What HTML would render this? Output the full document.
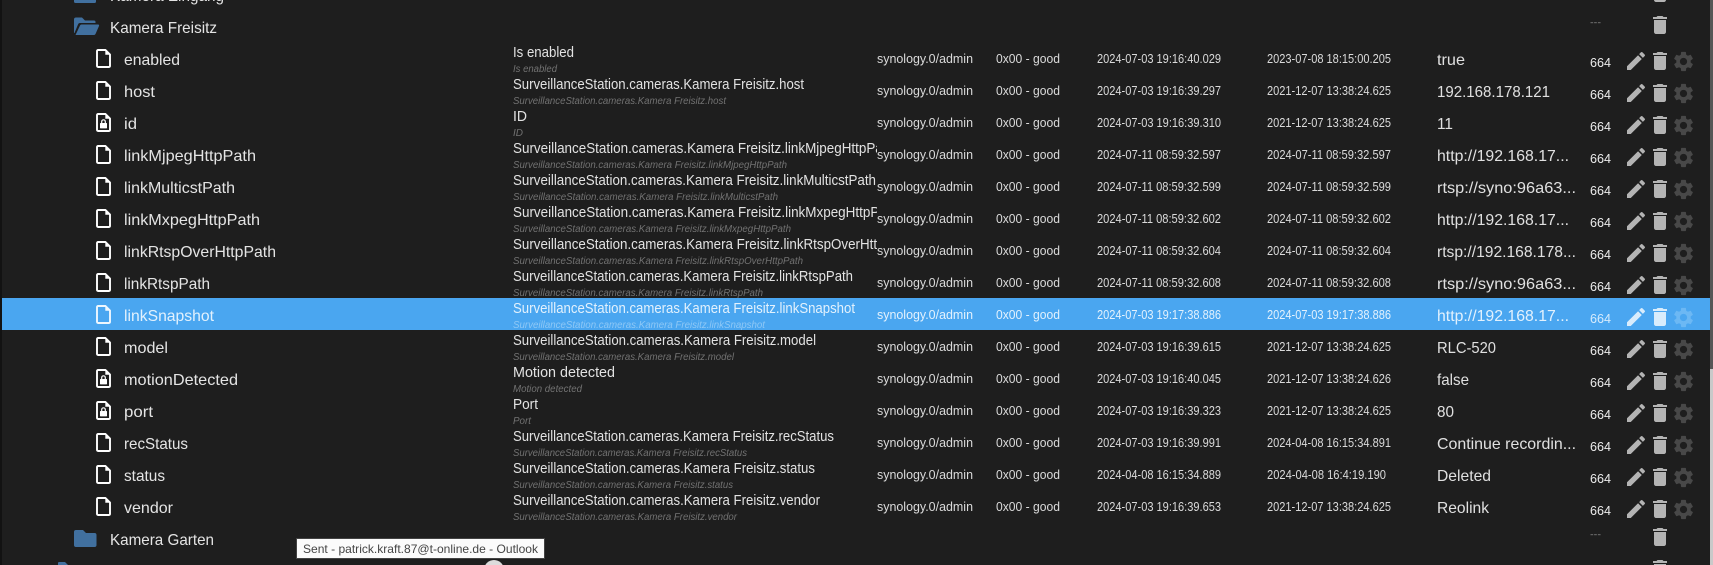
<!DOCTYPE html>
<html><head><meta charset="utf-8"><title>Kamera Freisitz</title>
<style>
html,body{margin:0;padding:0;background:#1e1e1e;width:1713px;height:565px;overflow:hidden}
svg{display:block}
text{font-family:"Liberation Sans",sans-serif;white-space:pre}
.n{font-size:16px;fill:#e4e4e4}
.t{font-size:14.5px;fill:#e2e2e2}
.s{font-size:10px;font-style:italic;fill:#727272}
.c{font-size:12.5px;fill:#dadada}
.v{font-size:16px;fill:#e0e0e0}
.m{font-size:12.5px;fill:#ececec}
.f{color:#fff}
.p{color:#b4b4b4}
.g{color:#484848}
.hl .n,.hl .t,.hl .c,.hl .v{fill:#e2f1fd}
.hl .s{fill:#8ec8f6}
.hl .m{fill:#d6ebfc}
.hl .f{color:#eef7fe}
.hl .p{color:#d8ecfc}
.hl .g{color:#6cb8f4}
</style></head>
<body>
<svg width="1713" height="565" viewBox="0 0 1713 565" xmlns="http://www.w3.org/2000/svg">
<defs>
<clipPath id="cl"><rect x="500" y="0" width="377" height="565"/></clipPath>
<symbol id="doc" viewBox="0 0 15 19" width="15" height="19" overflow="visible">
<path d="M2.2 1H9.5L14 5.5V16.8Q14 18 12.8 18H2.2Q1 18 1 16.8V2.2Q1 1 2.2 1Z" fill="none" stroke="currentColor" stroke-width="1.9" stroke-linejoin="round"/>
<path d="M9.3 1V5.7H14Z" fill="currentColor"/>
</symbol>
<symbol id="lock" viewBox="0 0 15 19" width="15" height="19" overflow="visible">
<path d="M2.2 1H9.5L14 5.5V16.8Q14 18 12.8 18H2.2Q1 18 1 16.8V2.2Q1 1 2.2 1Z" fill="none" stroke="currentColor" stroke-width="1.9" stroke-linejoin="round"/>
<path d="M9.3 1V5.7H14Z" fill="currentColor"/>
<path d="M5.7 10V8.6a1.8 1.8 0 0 1 3.6 0V10" fill="none" stroke="currentColor" stroke-width="1.2"/>
<rect x="4" y="10" width="7" height="5.4" rx=".6" fill="currentColor"/>
</symbol>
<symbol id="edit" viewBox="0 0 24 24" width="24" height="24"><path fill="currentColor" d="M3 17.25V21h3.75L17.81 9.94l-3.75-3.75L3 17.25zM20.71 7.04c.39-.39.39-1.02 0-1.41l-2.34-2.34c-.39-.39-1.02-.39-1.41 0l-1.83 1.83 3.75 3.75 1.83-1.83z"/></symbol>
<symbol id="del" viewBox="0 0 24 24" width="24" height="24"><path fill="currentColor" d="M6 19c0 1.1.9 2 2 2h8c1.1 0 2-.9 2-2V7H6v12zM19 4h-3.5l-1-1h-5l-1 1H5v2h14V4z"/></symbol>
<symbol id="gear" viewBox="0 0 24 24" width="24" height="24"><path fill="currentColor" d="M19.14 12.94c.04-.3.06-.61.06-.94 0-.32-.02-.64-.07-.94l2.03-1.58c.18-.14.23-.41.12-.61l-1.92-3.32c-.12-.22-.37-.29-.59-.22l-2.39.96c-.5-.38-1.03-.7-1.62-.94l-.36-2.54c-.04-.24-.24-.41-.48-.41h-3.84c-.24 0-.43.17-.47.41l-.36 2.54c-.59.24-1.13.57-1.62.94l-2.39-.96c-.22-.08-.47 0-.59.22L2.74 8.87c-.12.21-.08.47.12.61l2.03 1.58c-.05.3-.07.62-.07.94s.02.64.07.94l-2.03 1.58c-.18.14-.23.41-.12.61l1.92 3.32c.12.22.37.29.59.22l2.39-.96c.5.38 1.03.7 1.62.94l.36 2.54c.05.24.24.41.48.41h3.84c.24 0 .44-.17.47-.41l.36-2.54c.59-.24 1.13-.56 1.62-.94l2.39.96c.22.08.47 0 .59-.22l1.92-3.32c.12-.22.07-.47-.12-.61l-2.01-1.58zM12 15.6c-1.98 0-3.6-1.62-3.6-3.6s1.62-3.6 3.6-3.6 3.6 1.62 3.6 3.6-1.62 3.6-3.6 3.6z"/></symbol>
<g id="act">
<use href="#edit" style="color:#b4b4b4" x="1624" y="49"/>
<use href="#del" style="color:#b4b4b4" x="1648" y="49"/>
<use href="#gear" style="color:#484848" x="1671.5" y="49.5"/>
</g>
</defs>

<rect width="1713" height="565" fill="#1e1e1e"/>
<rect x="0" y="0" width="2" height="565" fill="#121212"/>
<rect x="1710" y="0" width="3" height="369" fill="#565656"/>
<rect x="1710" y="369" width="3" height="196" fill="#c9c9c9"/>
<rect x="2" y="298" width="1708" height="32" fill="#4aa6f0"/>

<!-- partial top row -->
<path d="M74 -6H96V1.5Q96 3 94.500 3H75.500Q74 3 74 1.500Z" fill="#41709f"/>
<text class="n" x="110" y="1" textLength="114" lengthAdjust="spacingAndGlyphs">Kamera Eingang</text>
<use href="#del" class="p" x="1648" y="-19"/>

<!-- Kamera Freisitz folder -->
<path d="M74 33V19.500Q74 17.500 76 17.500H82L85 20.500H94Q95.500 20.500 95.500 22V23H80Q78.500 23 78 24.500L74.500 33Z" fill="#41709f"/>
<path d="M75.500 35L80 25.500Q80.500 24.500 81.500 24.500H98Q99.500 24.500 99 26L95.500 34Q95 35 94 35Z" fill="#41709f"/>
<text class="n" x="110" y="33" textLength="107" lengthAdjust="spacingAndGlyphs">Kamera Freisitz</text>
<text class="m" x="1590" y="25" textLength="11" lengthAdjust="spacingAndGlyphs" style="font-size:8px;fill:#999">---</text>
<use href="#del" class="p" x="1648" y="13"/>

<!-- Rows -->
<g>
<use href="#doc" class="f" x="96" y="49"/>
<text class="n" x="124" y="65" textLength="56" lengthAdjust="spacingAndGlyphs">enabled</text>
<text class="t" x="513" y="57" textLength="61" lengthAdjust="spacingAndGlyphs">Is enabled</text>
<text class="s" x="513" y="72" textLength="44" lengthAdjust="spacingAndGlyphs">Is enabled</text>
<text class="c" x="877" y="63" textLength="96" lengthAdjust="spacingAndGlyphs">synology.0/admin</text>
<text class="c" x="996" y="63" textLength="64" lengthAdjust="spacingAndGlyphs">0x00 - good</text>
<text class="c" x="1097" y="63" textLength="124" lengthAdjust="spacingAndGlyphs">2024-07-03 19:16:40.029</text>
<text class="c" x="1267" y="63" textLength="124" lengthAdjust="spacingAndGlyphs">2023-07-08 18:15:00.205</text>
<text class="v" x="1437" y="65" textLength="28" lengthAdjust="spacingAndGlyphs">true</text>
<text class="m" x="1590" y="67" textLength="21" lengthAdjust="spacingAndGlyphs">664</text>
<use href="#act"/>
</g>
<g transform="translate(0,32)">
<use href="#doc" class="f" x="96" y="49"/>
<text class="n" x="124" y="65" textLength="31" lengthAdjust="spacingAndGlyphs">host</text>
<text class="t" x="513" y="57" textLength="291" lengthAdjust="spacingAndGlyphs">SurveillanceStation.cameras.Kamera Freisitz.host</text>
<text class="s" x="513" y="72" textLength="213" lengthAdjust="spacingAndGlyphs">SurveillanceStation.cameras.Kamera Freisitz.host</text>
<text class="c" x="877" y="63" textLength="96" lengthAdjust="spacingAndGlyphs">synology.0/admin</text>
<text class="c" x="996" y="63" textLength="64" lengthAdjust="spacingAndGlyphs">0x00 - good</text>
<text class="c" x="1097" y="63" textLength="124" lengthAdjust="spacingAndGlyphs">2024-07-03 19:16:39.297</text>
<text class="c" x="1267" y="63" textLength="124" lengthAdjust="spacingAndGlyphs">2021-12-07 13:38:24.625</text>
<text class="v" x="1437" y="65" textLength="113" lengthAdjust="spacingAndGlyphs">192.168.178.121</text>
<text class="m" x="1590" y="67" textLength="21" lengthAdjust="spacingAndGlyphs">664</text>
<use href="#act"/>
</g>
<g transform="translate(0,64)">
<use href="#lock" class="f" x="96" y="49"/>
<text class="n" x="124" y="65" textLength="13" lengthAdjust="spacingAndGlyphs">id</text>
<text class="t" x="513" y="57" textLength="14" lengthAdjust="spacingAndGlyphs">ID</text>
<text class="s" x="513" y="72" textLength="10" lengthAdjust="spacingAndGlyphs">ID</text>
<text class="c" x="877" y="63" textLength="96" lengthAdjust="spacingAndGlyphs">synology.0/admin</text>
<text class="c" x="996" y="63" textLength="64" lengthAdjust="spacingAndGlyphs">0x00 - good</text>
<text class="c" x="1097" y="63" textLength="124" lengthAdjust="spacingAndGlyphs">2024-07-03 19:16:39.310</text>
<text class="c" x="1267" y="63" textLength="124" lengthAdjust="spacingAndGlyphs">2021-12-07 13:38:24.625</text>
<text class="v" x="1437" y="65" textLength="16" lengthAdjust="spacingAndGlyphs">11</text>
<text class="m" x="1590" y="67" textLength="21" lengthAdjust="spacingAndGlyphs">664</text>
<use href="#act"/>
</g>
<g transform="translate(0,96)">
<use href="#doc" class="f" x="96" y="49"/>
<text class="n" x="124" y="65" textLength="132" lengthAdjust="spacingAndGlyphs">linkMjpegHttpPath</text>
<g clip-path="url(#cl)"><text class="t" x="513" y="57" textLength="381" lengthAdjust="spacingAndGlyphs">SurveillanceStation.cameras.Kamera Freisitz.linkMjpegHttpPath</text></g>
<text class="s" x="513" y="72" textLength="274" lengthAdjust="spacingAndGlyphs">SurveillanceStation.cameras.Kamera Freisitz.linkMjpegHttpPath</text>
<text class="c" x="877" y="63" textLength="96" lengthAdjust="spacingAndGlyphs">synology.0/admin</text>
<text class="c" x="996" y="63" textLength="64" lengthAdjust="spacingAndGlyphs">0x00 - good</text>
<text class="c" x="1097" y="63" textLength="124" lengthAdjust="spacingAndGlyphs">2024-07-11 08:59:32.597</text>
<text class="c" x="1267" y="63" textLength="124" lengthAdjust="spacingAndGlyphs">2024-07-11 08:59:32.597</text>
<text class="v" x="1437" y="65" textLength="132" lengthAdjust="spacingAndGlyphs">http://192.168.17...</text>
<text class="m" x="1590" y="67" textLength="21" lengthAdjust="spacingAndGlyphs">664</text>
<use href="#act"/>
</g>
<g transform="translate(0,128)">
<use href="#doc" class="f" x="96" y="49"/>
<text class="n" x="124" y="65" textLength="111" lengthAdjust="spacingAndGlyphs">linkMulticstPath</text>
<g clip-path="url(#cl)"><text class="t" x="513" y="57" textLength="363" lengthAdjust="spacingAndGlyphs">SurveillanceStation.cameras.Kamera Freisitz.linkMulticstPath</text></g>
<text class="s" x="513" y="72" textLength="265" lengthAdjust="spacingAndGlyphs">SurveillanceStation.cameras.Kamera Freisitz.linkMulticstPath</text>
<text class="c" x="877" y="63" textLength="96" lengthAdjust="spacingAndGlyphs">synology.0/admin</text>
<text class="c" x="996" y="63" textLength="64" lengthAdjust="spacingAndGlyphs">0x00 - good</text>
<text class="c" x="1097" y="63" textLength="124" lengthAdjust="spacingAndGlyphs">2024-07-11 08:59:32.599</text>
<text class="c" x="1267" y="63" textLength="124" lengthAdjust="spacingAndGlyphs">2024-07-11 08:59:32.599</text>
<text class="v" x="1437" y="65" textLength="139" lengthAdjust="spacingAndGlyphs">rtsp://syno:96a63...</text>
<text class="m" x="1590" y="67" textLength="21" lengthAdjust="spacingAndGlyphs">664</text>
<use href="#act"/>
</g>
<g transform="translate(0,160)">
<use href="#doc" class="f" x="96" y="49"/>
<text class="n" x="124" y="65" textLength="136" lengthAdjust="spacingAndGlyphs">linkMxpegHttpPath</text>
<g clip-path="url(#cl)"><text class="t" x="513" y="57" textLength="385" lengthAdjust="spacingAndGlyphs">SurveillanceStation.cameras.Kamera Freisitz.linkMxpegHttpPath</text></g>
<text class="s" x="513" y="72" textLength="278" lengthAdjust="spacingAndGlyphs">SurveillanceStation.cameras.Kamera Freisitz.linkMxpegHttpPath</text>
<text class="c" x="877" y="63" textLength="96" lengthAdjust="spacingAndGlyphs">synology.0/admin</text>
<text class="c" x="996" y="63" textLength="64" lengthAdjust="spacingAndGlyphs">0x00 - good</text>
<text class="c" x="1097" y="63" textLength="124" lengthAdjust="spacingAndGlyphs">2024-07-11 08:59:32.602</text>
<text class="c" x="1267" y="63" textLength="124" lengthAdjust="spacingAndGlyphs">2024-07-11 08:59:32.602</text>
<text class="v" x="1437" y="65" textLength="132" lengthAdjust="spacingAndGlyphs">http://192.168.17...</text>
<text class="m" x="1590" y="67" textLength="21" lengthAdjust="spacingAndGlyphs">664</text>
<use href="#act"/>
</g>
<g transform="translate(0,192)">
<use href="#doc" class="f" x="96" y="49"/>
<text class="n" x="124" y="65" textLength="152" lengthAdjust="spacingAndGlyphs">linkRtspOverHttpPath</text>
<g clip-path="url(#cl)"><text class="t" x="513" y="57" textLength="399" lengthAdjust="spacingAndGlyphs">SurveillanceStation.cameras.Kamera Freisitz.linkRtspOverHttpPath</text></g>
<text class="s" x="513" y="72" textLength="290" lengthAdjust="spacingAndGlyphs">SurveillanceStation.cameras.Kamera Freisitz.linkRtspOverHttpPath</text>
<text class="c" x="877" y="63" textLength="96" lengthAdjust="spacingAndGlyphs">synology.0/admin</text>
<text class="c" x="996" y="63" textLength="64" lengthAdjust="spacingAndGlyphs">0x00 - good</text>
<text class="c" x="1097" y="63" textLength="124" lengthAdjust="spacingAndGlyphs">2024-07-11 08:59:32.604</text>
<text class="c" x="1267" y="63" textLength="124" lengthAdjust="spacingAndGlyphs">2024-07-11 08:59:32.604</text>
<text class="v" x="1437" y="65" textLength="139" lengthAdjust="spacingAndGlyphs">rtsp://192.168.178...</text>
<text class="m" x="1590" y="67" textLength="21" lengthAdjust="spacingAndGlyphs">664</text>
<use href="#act"/>
</g>
<g transform="translate(0,224)">
<use href="#doc" class="f" x="96" y="49"/>
<text class="n" x="124" y="65" textLength="86" lengthAdjust="spacingAndGlyphs">linkRtspPath</text>
<text class="t" x="513" y="57" textLength="340" lengthAdjust="spacingAndGlyphs">SurveillanceStation.cameras.Kamera Freisitz.linkRtspPath</text>
<text class="s" x="513" y="72" textLength="250" lengthAdjust="spacingAndGlyphs">SurveillanceStation.cameras.Kamera Freisitz.linkRtspPath</text>
<text class="c" x="877" y="63" textLength="96" lengthAdjust="spacingAndGlyphs">synology.0/admin</text>
<text class="c" x="996" y="63" textLength="64" lengthAdjust="spacingAndGlyphs">0x00 - good</text>
<text class="c" x="1097" y="63" textLength="124" lengthAdjust="spacingAndGlyphs">2024-07-11 08:59:32.608</text>
<text class="c" x="1267" y="63" textLength="124" lengthAdjust="spacingAndGlyphs">2024-07-11 08:59:32.608</text>
<text class="v" x="1437" y="65" textLength="139" lengthAdjust="spacingAndGlyphs">rtsp://syno:96a63...</text>
<text class="m" x="1590" y="67" textLength="21" lengthAdjust="spacingAndGlyphs">664</text>
<use href="#act"/>
</g>
<g transform="translate(0,256)" class="hl">
<use href="#doc" class="f" x="96" y="49"/>
<text class="n" x="124" y="65" textLength="90" lengthAdjust="spacingAndGlyphs">linkSnapshot</text>
<text class="t" x="513" y="57" textLength="342" lengthAdjust="spacingAndGlyphs">SurveillanceStation.cameras.Kamera Freisitz.linkSnapshot</text>
<text class="s" x="513" y="72" textLength="252" lengthAdjust="spacingAndGlyphs">SurveillanceStation.cameras.Kamera Freisitz.linkSnapshot</text>
<text class="c" x="877" y="63" textLength="96" lengthAdjust="spacingAndGlyphs">synology.0/admin</text>
<text class="c" x="996" y="63" textLength="64" lengthAdjust="spacingAndGlyphs">0x00 - good</text>
<text class="c" x="1097" y="63" textLength="124" lengthAdjust="spacingAndGlyphs">2024-07-03 19:17:38.886</text>
<text class="c" x="1267" y="63" textLength="124" lengthAdjust="spacingAndGlyphs">2024-07-03 19:17:38.886</text>
<text class="v" x="1437" y="65" textLength="132" lengthAdjust="spacingAndGlyphs">http://192.168.17...</text>
<text class="m" x="1590" y="67" textLength="21" lengthAdjust="spacingAndGlyphs">664</text>
<use href="#edit" style="color:#d8ecfc" x="1624" y="49"/>
<use href="#del" style="color:#d8ecfc" x="1648" y="49"/>
<use href="#gear" style="color:#6cb8f4" x="1671.5" y="49.5"/>
</g>
<g transform="translate(0,288)">
<use href="#doc" class="f" x="96" y="49"/>
<text class="n" x="124" y="65" textLength="44" lengthAdjust="spacingAndGlyphs">model</text>
<text class="t" x="513" y="57" textLength="303" lengthAdjust="spacingAndGlyphs">SurveillanceStation.cameras.Kamera Freisitz.model</text>
<text class="s" x="513" y="72" textLength="221" lengthAdjust="spacingAndGlyphs">SurveillanceStation.cameras.Kamera Freisitz.model</text>
<text class="c" x="877" y="63" textLength="96" lengthAdjust="spacingAndGlyphs">synology.0/admin</text>
<text class="c" x="996" y="63" textLength="64" lengthAdjust="spacingAndGlyphs">0x00 - good</text>
<text class="c" x="1097" y="63" textLength="124" lengthAdjust="spacingAndGlyphs">2024-07-03 19:16:39.615</text>
<text class="c" x="1267" y="63" textLength="124" lengthAdjust="spacingAndGlyphs">2021-12-07 13:38:24.625</text>
<text class="v" x="1437" y="65" textLength="59" lengthAdjust="spacingAndGlyphs">RLC-520</text>
<text class="m" x="1590" y="67" textLength="21" lengthAdjust="spacingAndGlyphs">664</text>
<use href="#act"/>
</g>
<g transform="translate(0,320)">
<use href="#lock" class="f" x="96" y="49"/>
<text class="n" x="124" y="65" textLength="114" lengthAdjust="spacingAndGlyphs">motionDetected</text>
<text class="t" x="513" y="57" textLength="102" lengthAdjust="spacingAndGlyphs">Motion detected</text>
<text class="s" x="513" y="72" textLength="69" lengthAdjust="spacingAndGlyphs">Motion detected</text>
<text class="c" x="877" y="63" textLength="96" lengthAdjust="spacingAndGlyphs">synology.0/admin</text>
<text class="c" x="996" y="63" textLength="64" lengthAdjust="spacingAndGlyphs">0x00 - good</text>
<text class="c" x="1097" y="63" textLength="124" lengthAdjust="spacingAndGlyphs">2024-07-03 19:16:40.045</text>
<text class="c" x="1267" y="63" textLength="124" lengthAdjust="spacingAndGlyphs">2021-12-07 13:38:24.626</text>
<text class="v" x="1437" y="65" textLength="32" lengthAdjust="spacingAndGlyphs">false</text>
<text class="m" x="1590" y="67" textLength="21" lengthAdjust="spacingAndGlyphs">664</text>
<use href="#act"/>
</g>
<g transform="translate(0,352)">
<use href="#lock" class="f" x="96" y="49"/>
<text class="n" x="124" y="65" textLength="29" lengthAdjust="spacingAndGlyphs">port</text>
<text class="t" x="513" y="57" textLength="25" lengthAdjust="spacingAndGlyphs">Port</text>
<text class="s" x="513" y="72" textLength="18" lengthAdjust="spacingAndGlyphs">Port</text>
<text class="c" x="877" y="63" textLength="96" lengthAdjust="spacingAndGlyphs">synology.0/admin</text>
<text class="c" x="996" y="63" textLength="64" lengthAdjust="spacingAndGlyphs">0x00 - good</text>
<text class="c" x="1097" y="63" textLength="124" lengthAdjust="spacingAndGlyphs">2024-07-03 19:16:39.323</text>
<text class="c" x="1267" y="63" textLength="124" lengthAdjust="spacingAndGlyphs">2021-12-07 13:38:24.625</text>
<text class="v" x="1437" y="65" textLength="17" lengthAdjust="spacingAndGlyphs">80</text>
<text class="m" x="1590" y="67" textLength="21" lengthAdjust="spacingAndGlyphs">664</text>
<use href="#act"/>
</g>
<g transform="translate(0,384)">
<use href="#doc" class="f" x="96" y="49"/>
<text class="n" x="124" y="65" textLength="64" lengthAdjust="spacingAndGlyphs">recStatus</text>
<text class="t" x="513" y="57" textLength="321" lengthAdjust="spacingAndGlyphs">SurveillanceStation.cameras.Kamera Freisitz.recStatus</text>
<text class="s" x="513" y="72" textLength="234" lengthAdjust="spacingAndGlyphs">SurveillanceStation.cameras.Kamera Freisitz.recStatus</text>
<text class="c" x="877" y="63" textLength="96" lengthAdjust="spacingAndGlyphs">synology.0/admin</text>
<text class="c" x="996" y="63" textLength="64" lengthAdjust="spacingAndGlyphs">0x00 - good</text>
<text class="c" x="1097" y="63" textLength="124" lengthAdjust="spacingAndGlyphs">2024-07-03 19:16:39.991</text>
<text class="c" x="1267" y="63" textLength="124" lengthAdjust="spacingAndGlyphs">2024-04-08 16:15:34.891</text>
<text class="v" x="1437" y="65" textLength="139" lengthAdjust="spacingAndGlyphs">Continue recordin...</text>
<text class="m" x="1590" y="67" textLength="21" lengthAdjust="spacingAndGlyphs">664</text>
<use href="#act"/>
</g>
<g transform="translate(0,416)">
<use href="#doc" class="f" x="96" y="49"/>
<text class="n" x="124" y="65" textLength="41" lengthAdjust="spacingAndGlyphs">status</text>
<text class="t" x="513" y="57" textLength="302" lengthAdjust="spacingAndGlyphs">SurveillanceStation.cameras.Kamera Freisitz.status</text>
<text class="s" x="513" y="72" textLength="220" lengthAdjust="spacingAndGlyphs">SurveillanceStation.cameras.Kamera Freisitz.status</text>
<text class="c" x="877" y="63" textLength="96" lengthAdjust="spacingAndGlyphs">synology.0/admin</text>
<text class="c" x="996" y="63" textLength="64" lengthAdjust="spacingAndGlyphs">0x00 - good</text>
<text class="c" x="1097" y="63" textLength="124" lengthAdjust="spacingAndGlyphs">2024-04-08 16:15:34.889</text>
<text class="c" x="1267" y="63" textLength="119" lengthAdjust="spacingAndGlyphs">2024-04-08 16:4:19.190</text>
<text class="v" x="1437" y="65" textLength="54" lengthAdjust="spacingAndGlyphs">Deleted</text>
<text class="m" x="1590" y="67" textLength="21" lengthAdjust="spacingAndGlyphs">664</text>
<use href="#act"/>
</g>
<g transform="translate(0,448)">
<use href="#doc" class="f" x="96" y="49"/>
<text class="n" x="124" y="65" textLength="49" lengthAdjust="spacingAndGlyphs">vendor</text>
<text class="t" x="513" y="57" textLength="307" lengthAdjust="spacingAndGlyphs">SurveillanceStation.cameras.Kamera Freisitz.vendor</text>
<text class="s" x="513" y="72" textLength="224" lengthAdjust="spacingAndGlyphs">SurveillanceStation.cameras.Kamera Freisitz.vendor</text>
<text class="c" x="877" y="63" textLength="96" lengthAdjust="spacingAndGlyphs">synology.0/admin</text>
<text class="c" x="996" y="63" textLength="64" lengthAdjust="spacingAndGlyphs">0x00 - good</text>
<text class="c" x="1097" y="63" textLength="124" lengthAdjust="spacingAndGlyphs">2024-07-03 19:16:39.653</text>
<text class="c" x="1267" y="63" textLength="124" lengthAdjust="spacingAndGlyphs">2021-12-07 13:38:24.625</text>
<text class="v" x="1437" y="65" textLength="52" lengthAdjust="spacingAndGlyphs">Reolink</text>
<text class="m" x="1590" y="67" textLength="21" lengthAdjust="spacingAndGlyphs">664</text>
<use href="#act"/>
</g>

<!-- Kamera Garten -->
<path d="M74 532Q74 530 76 530H83L86 533H94.500Q96.500 533 96.500 535V545Q96.500 547 94.500 547H76Q74 547 74 545Z" fill="#41709f"/>
<text class="n" x="110" y="545" textLength="104" lengthAdjust="spacingAndGlyphs">Kamera Garten</text>
<text class="m" x="1590" y="537" textLength="11" lengthAdjust="spacingAndGlyphs" style="font-size:8px;fill:#999">---</text>
<use href="#del" class="p" x="1648" y="525"/>

<!-- partial bottom row -->
<path d="M58 565V563Q58 562 59 562H65L68 565Z" fill="#41709f"/>
<use href="#del" class="p" x="1648" y="557"/>

<!-- tooltip -->
<circle cx="494" cy="570" r="10" fill="#dcdcdc"/>
<rect x="296" y="538" width="249" height="21" fill="#8a8a8a" opacity=".35"/>
<rect x="297" y="539" width="247" height="19" fill="#fbfbfb"/>
<text x="303" y="553" textLength="235" lengthAdjust="spacingAndGlyphs" style="font-size:12px;fill:#444">Sent - patrick.kraft.87@t-online.de - Outlook</text>
</svg>
</body></html>
